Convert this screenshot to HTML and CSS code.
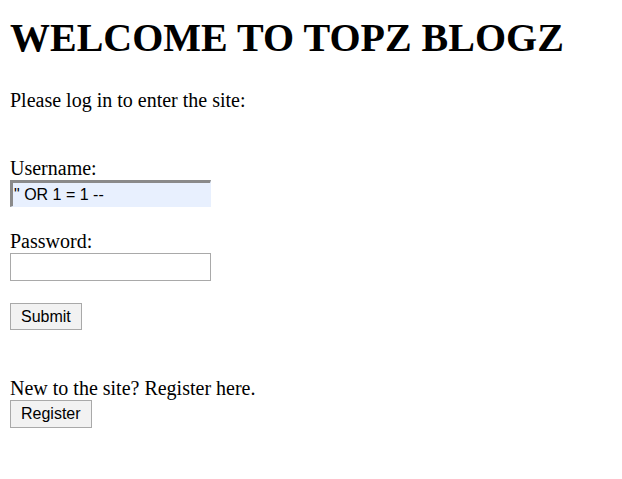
FILE: index.html
```html
<!DOCTYPE html>
<html>
<head>
<meta charset="utf-8">
<link rel="stylesheet" href="styles.css">
</head>
<body>
<h1 class="title">WELCOME TO TOPZ BLOGZ</h1>
<p class="intro">Please log in to enter the site:</p>
<form class="login">
  <label class="field field-user">
    <span class="label">Username:</span>
    <input class="text-input user" type="text" value="&quot; OR 1 = 1 --">
  </label>
  <label class="field">
    <span class="label">Password:</span>
    <input class="text-input" type="password">
  </label>
  <button class="btn submit" type="button">Submit</button>
</form>
<div class="register">
  <span class="label">New to the site? Register here.</span>
  <button class="btn" type="button">Register</button>
</div>
</body>
</html>
```
FILE: styles.css
```css
html, body { background: #fff; }
body {
  margin: 0;
  padding: 10px;
  font-family: "Liberation Serif", "Times New Roman", serif;
  font-size: 20px;
  color: #000;
}
.title {
  font-size: 40px;
  font-weight: bold;
  margin: 5px 0 0 0;
  line-height: 46px;
}
.intro {
  margin: 28px 0 0 0;
  line-height: 23px;
}
.login {
  display: flex;
  flex-direction: column;
  align-items: flex-start;
  margin-top: 45px;
}
.field {
  display: flex;
  flex-direction: column;
  align-items: flex-start;
  margin-bottom: 22px;
}
.field-user { margin-bottom: 23px; }
.label {
  display: block;
  line-height: 23px;
}
.text-input {
  box-sizing: border-box;
  width: 201px;
  height: 28px;
  margin: 0;
  padding: 1px 2px;
  font-family: "Liberation Sans", Arial, sans-serif;
  font-size: 16px;
  color: #000;
  border: 1px solid #a9a9a9;
  background: #fff;
  outline: none;
}
.text-input.user {
  height: 27px;
  background: #e8f0fe;
  border-top: 3px solid #8a8a8a;
  border-left: 3px solid #8a8a8a;
  border-right: 1px solid #e8f0fe;
  border-bottom: 1px solid #e8f0fe;
  padding: 0 1px;
}
.btn {
  box-sizing: border-box;
  height: 27px;
  padding: 0 10px;
  margin: 0;
  font-family: "Liberation Sans", Arial, sans-serif;
  font-size: 16px;
  color: #000;
  background: #f2f2f2;
  border: 1px solid #a9a9a9;
  border-radius: 0;
}
.register {
  display: flex;
  flex-direction: column;
  align-items: flex-start;
  margin-top: 47px;
}
.register .btn { height: 28px; }
```
